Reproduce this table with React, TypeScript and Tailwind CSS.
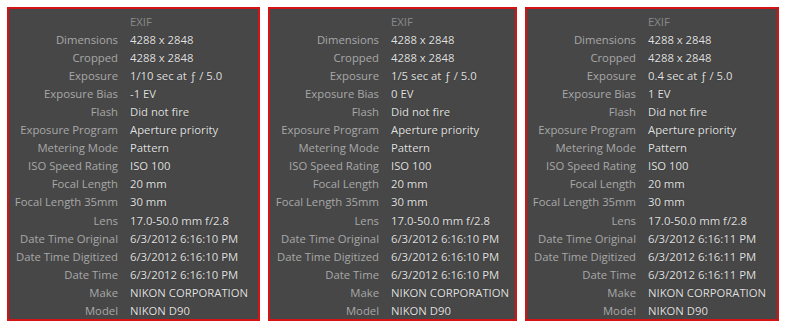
import React from "react";

type Panel = { width: string; exposure: string; bias: string; time: string };

const panels: Panel[] = [
  { width: "w-[253px]", exposure: "1/10 sec at ƒ / 5.0", bias: "-1 EV", time: "6/3/2012 6:16:10 PM" },
  { width: "w-[249px]", exposure: "1/5 sec at ƒ / 5.0", bias: "0 EV", time: "6/3/2012 6:16:10 PM" },
  { width: "w-[254px]", exposure: "0.4 sec at ƒ / 5.0", bias: "1 EV", time: "6/3/2012 6:16:11 PM" },
];

function rows(p: Panel): [string, string][] {
  return [
    ["Dimensions", "4288 x 2848"],
    ["Cropped", "4288 x 2848"],
    ["Exposure", p.exposure],
    ["Exposure Bias", p.bias],
    ["Flash", "Did not fire"],
    ["Exposure Program", "Aperture priority"],
    ["Metering Mode", "Pattern"],
    ["ISO Speed Rating", "ISO 100"],
    ["Focal Length", "20 mm"],
    ["Focal Length 35mm", "30 mm"],
    ["Lens", "17.0-50.0 mm f/2.8"],
    ["Date Time Original", p.time],
    ["Date Time Digitized", p.time],
    ["Date Time", p.time],
    ["Make", "NIKON CORPORATION"],
    ["Model", "NIKON D90"],
  ];
}

function ExifPanel({ p }: { p: Panel }) {
  return (
    <div className={`${p.width} h-[314px] border-2 border-[#d41414] bg-[#474747] pt-[3.5px] overflow-hidden`}>
      <div className="flex h-[18.1px] items-center">
        <div className="w-[109px] shrink-0" />
        <div className="pl-[12px] text-[#8a8a8a]">EXIF</div>
      </div>
      {rows(p).map(([k, v]) => (
        <div key={k} className="flex h-[18.1px] items-center">
          <div className="w-[109px] shrink-0 flex justify-end whitespace-nowrap text-[#a8a8a8]">{k}</div>
          <div className="pl-[12px] whitespace-nowrap text-[#e2e2e2] [text-shadow:0_0_1px_#222]">{v}</div>
        </div>
      ))}
    </div>
  );
}

export default function App() {
  return (
    <div className="w-[786px] h-[332px] bg-white pt-[7px] pl-[7px] flex gap-[8px] text-[11.3px] leading-[18px] font-['Open_Sans',sans-serif]">
      {panels.map((p, i) => (
        <ExifPanel key={i} p={p} />
      ))}
    </div>
  );
}
